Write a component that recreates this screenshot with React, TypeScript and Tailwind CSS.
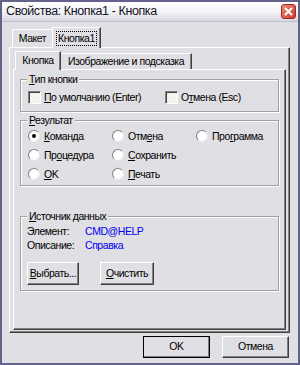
import React from "react";

const font = { fontFamily: '"Liberation Sans", Arial, sans-serif' };

function U({ children }: { children: React.ReactNode }) {
    return <span className="underline underline-offset-[1px]">{children}</span>;
}

function Check({ label }: { label: React.ReactNode }) {
    return (
        <div className="flex items-center gap-[3px]">
            <div className="w-[13px] h-[13px] bg-[#f4f3ee] border border-t-[#808080] border-l-[#808080] border-r-white border-b-white shadow-[inset_1px_1px_0_#404040]" />
            <span>{label}</span>
        </div>
    );
}

function Radio({ label, checked = false }: { label: React.ReactNode; checked?: boolean }) {
    return (
        <div className="flex items-center gap-[4px]">
            <div className="w-[12px] h-[12px] rounded-full bg-white border border-t-[#808080] border-l-[#808080] border-r-[#e8e8e8] border-b-[#e8e8e8] flex items-center justify-center">
                {checked && <div className="w-[4px] h-[4px] rounded-full bg-black" />}
            </div>
            <span>{label}</span>
        </div>
    );
}

function Group({ title, className, children }: { title: React.ReactNode; className: string; children: React.ReactNode }) {
    return (
        <div className={"relative border border-[#a0a0a0] shadow-[1px_1px_0_white,inset_1px_1px_0_white] " + className}>
            <div className="absolute -top-[8px] left-[6px] bg-[#e0dfe3] px-[2px] leading-[14px]">{title}</div>
            {children}
        </div>
    );
}

function Btn({ children, className = "" }: { children: React.ReactNode; className?: string }) {
    return (
        <div className={"flex items-center justify-center bg-[#e0dfe3] border border-t-white border-l-white border-r-[#404040] border-b-[#404040] shadow-[inset_-1px_-1px_0_#808080] " + className}>
            {children}
        </div>
    );
}

export default function App() {
    return (
        <div style={font} className="w-[300px] h-[365px] bg-[#e0dfe3] border-2 border-[#62628a] flex flex-col text-[10.5px] tracking-[-0.45px] text-black overflow-hidden">
            {/* Title bar */}
            <div className="h-[20px] shrink-0 bg-gradient-to-b from-white via-[#f4f4f8] to-[#d8d7e2] flex items-center justify-between pl-[4px] pr-[2px] border-b border-[#c0bfcc]">
                <span className="text-[12.5px] text-[#101020] tracking-[-0.4px]">Свойства: Кнопка1 - Кнопка</span>
                <div className="w-[15px] h-[15px] rounded-[3px] bg-gradient-to-br from-[#f08a7a] to-[#c83a2a] border border-[#a02a20] flex items-center justify-center">
                    <svg width="9" height="9" viewBox="0 0 9 9">
                        <path d="M1.5 1.5 L7.5 7.5 M7.5 1.5 L1.5 7.5" stroke="white" strokeWidth="2" strokeLinecap="round" />
                    </svg>
                </div>
            </div>

            {/* Body */}
            <div className="flex-1 flex flex-col pl-[7px] pr-[8px] pt-[4px]">
                {/* Outer tabs */}
                <div className="flex items-end h-[21px] pl-[3px]">
                    <div className="h-[18px] w-[41px] flex items-center justify-center border-t border-l border-r border-t-white border-l-white border-r-[#808080] rounded-tl-[2px]">Макет</div>
                    <div className="h-[21px] w-[49px] -ml-[1px] flex items-center justify-center bg-[#e0dfe3] border-t border-l border-r border-t-white border-l-white border-r-[#404040] shadow-[inset_-1px_0_0_#808080] relative z-10 -mb-[1px]">
                        <span className="border border-dotted border-black px-[1px] leading-[13px]">Кнопка1</span>
                    </div>
                </div>
                {/* Outer panel */}
                <div className="h-[286px] border border-t-white border-l-white border-r-[#404040] border-b-[#404040] shadow-[inset_-1px_-1px_0_#808080] flex flex-col pl-[3px] pt-[2px]">
                    {/* Inner tabs */}
                    <div className="flex items-end h-[19px] pl-[2px]">
                        <div className="h-[19px] w-[46px] flex items-center justify-center bg-[#e0dfe3] border-t border-l border-r border-t-white border-l-white border-r-[#404040] shadow-[inset_-1px_0_0_#808080] relative z-10 -mb-[1px]">Кнопка</div>
                        <div className="h-[16px] w-[131px] flex items-center justify-center border-t border-r border-t-white border-r-[#404040] shadow-[inset_-1px_0_0_#808080]">Изображение и подсказка</div>
                    </div>
                    {/* Inner panel */}
                    <div className="w-[273px] h-[261px] border border-t-white border-l-white border-r-[#404040] border-b-[#404040] shadow-[inset_-1px_-1px_0_#808080] flex flex-col pl-[6px] pt-[9px]">
                        <Group title={<><U>Т</U>ип кнопки</>} className="w-[259px] h-[33px] flex items-center pl-[7px]">
                            <div className="flex w-full pt-[4px]">
                                <div className="w-[137px]"><Check label={<><U>П</U>о умолчанию (Enter)</>} /></div>
                                <Check label={<>О<U>т</U>мена (Esc)</>} />
                            </div>
                        </Group>
                        <Group title={<><U>Р</U>езультат</>} className="w-[259px] h-[66px] mt-[8px] pl-[7px] pt-[9px]">
                            <div className="grid grid-cols-[84px_84px_1fr] gap-y-[7px] leading-[12px]">
                                <Radio checked label={<><U>К</U>оманда</>} />
                                <Radio label={<>Отм<U>е</U>на</>} />
                                <Radio label={<>Про<U>г</U>рамма</>} />
                                <Radio label={<>Пр<U>о</U>цедура</>} />
                                <Radio label={<><U>С</U>охранить</>} />
                                <div />
                                <Radio label={<><U>О</U>K</>} />
                                <Radio label={<><U>П</U>ечать</>} />
                            </div>
                        </Group>
                        <Group title={<><U>И</U>сточник данных</>} className="w-[259px] h-[75px] mt-[30px] pl-[6px] pt-[8px]">
                            <div className="grid grid-cols-[58px_1fr] gap-y-[1px] leading-[13px]">
                                <span>Элемент:</span>
                                <span className="text-[#0000f0]">CMD@HELP</span>
                                <span>Описание:</span>
                                <span className="text-[#0000f0]">Справка</span>
                            </div>
                            <div className="flex gap-[21px] mt-[10px]">
                                <Btn className="w-[52px] h-[23px]"><U>В</U>ыбрать...</Btn>
                                <Btn className="w-[54px] h-[23px]"><U>О</U>чистить</Btn>
                            </div>
                        </Group>
                    </div>
                </div>
                {/* Bottom buttons */}
                <div className="flex justify-end gap-[12px] mt-[3px] pr-[1px]">
                    <Btn className="w-[67px] h-[22px] outline outline-1 outline-black -outline-offset-1">OK</Btn>
                    <Btn className="w-[67px] h-[22px]">Отмена</Btn>
                </div>
            </div>
        </div>
    );
}
